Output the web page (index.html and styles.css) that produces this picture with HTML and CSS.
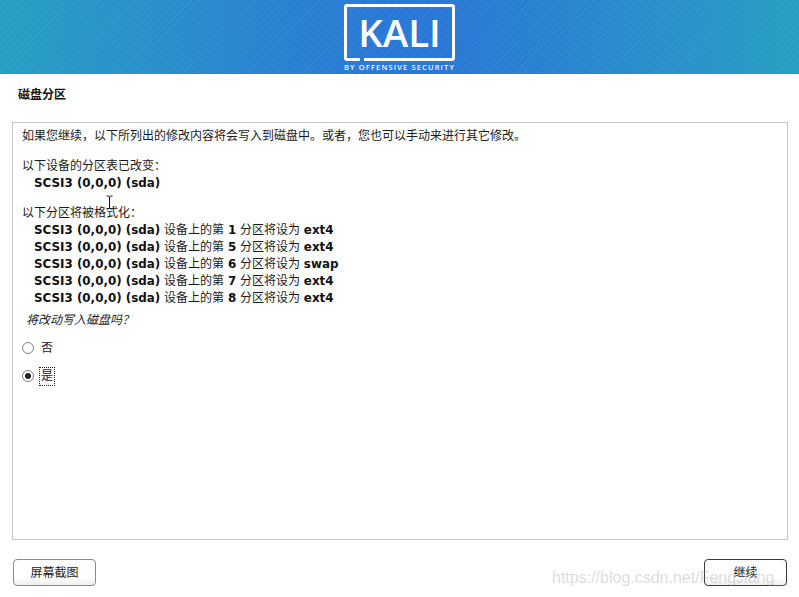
FILE: index.html
```html
<!DOCTYPE html>
<html lang="zh-CN">
<head>
    <meta charset="UTF-8">
    <title>磁盘分区</title>
    <link rel="stylesheet" href="styles.css">
</head>
<body>
<div class="banner">
    <div class="logo-box"><span class="logo-word">KALI</span></div>
    <div class="logo-sub">BY OFFENSIVE SECURITY</div>
</div>
<div class="page-title">磁盘分区</div>
<div class="content-box">
    <div class="line first">如果您继续，以下所列出的修改内容将会写入到磁盘中。或者，您也可以手动来进行其它修改。</div>
    <div class="line gap-big">以下设备的分区表已改变：</div>
    <div class="line indent"><b>SCSI3 (0,0,0) (sda)</b></div>
    <div class="line gap-mid">以下分区将被格式化：</div>
    <div class="line indent"><b>SCSI3 (0,0,0) (sda)</b> 设备上的第 <b>1</b> 分区将设为 <b>ext4</b></div>
    <div class="line indent"><b>SCSI3 (0,0,0) (sda)</b> 设备上的第 <b>5</b> 分区将设为 <b>ext4</b></div>
    <div class="line indent"><b>SCSI3 (0,0,0) (sda)</b> 设备上的第 <b>6</b> 分区将设为 <b>swap</b></div>
    <div class="line indent"><b>SCSI3 (0,0,0) (sda)</b> 设备上的第 <b>7</b> 分区将设为 <b>ext4</b></div>
    <div class="line indent"><b>SCSI3 (0,0,0) (sda)</b> 设备上的第 <b>8</b> 分区将设为 <b>ext4</b></div>
    <div class="question">将改动写入磁盘吗？</div>
    <div class="radio-row first-radio"><span class="radio"></span><span class="radio-label">否</span></div>
    <div class="radio-row"><span class="radio checked"></span><span class="radio-label focused">是</span></div>
</div>
<div class="button-row">
    <div class="button">屏幕截图</div>
    <div class="button default">继续</div>
</div>
<svg class="cursor" width="9" height="15" viewBox="0 0 9 15">
    <path d="M1.5 1H3.5L4.5 2L5.5 1H7.5M4.5 2V13M1.5 14H3.5L4.5 13L5.5 14H7.5" fill="none" stroke="#111" stroke-width="1"/>
</svg>
<div class="watermark">https://blog.csdn.net/FengJiang_</div>
</body>
</html>
```

FILE: styles.css
```css
* {
    box-sizing: border-box;
}

body {
    margin: 0;
    width: 799px;
    height: 597px;
    overflow: hidden;
    background-color: #fff;
    color: #1a1a1a;
    font-family: "DejaVu Sans", "Noto Sans CJK SC", sans-serif;
    font-size: 12px;
    position: relative;
}

.banner {
    height: 74px;
    padding-top: 4px;
    display: flex;
    flex-direction: column;
    align-items: center;
    background-color: #2a7ad4;
    background-image:
        repeating-linear-gradient(135deg, rgba(255, 255, 255, 0.025) 0 2px, rgba(255, 255, 255, 0) 2px 5px),
        linear-gradient(90deg, #279fc2 0%, #2a78d6 48%, #2a78d6 56%, #279fc2 100%);
}

.logo-box {
    width: 111px;
    height: 57px;
    border: 3px solid #fff;
    border-radius: 3px;
    display: flex;
    align-items: center;
    justify-content: center;
    position: relative;
}

/* little notch in the bottom edge of the frame */
.logo-box::after {
    content: "";
    position: absolute;
    left: 13px;
    bottom: -3px;
    width: 4px;
    height: 3px;
    background-color: #2a78d6;
}

.logo-word {
    color: #fff;
    font-family: "Open Sans", sans-serif;
    font-size: 38.5px;
    font-weight: 600;
    line-height: 1;
}

.logo-sub {
    margin-top: 2px;
    color: #f2f6fc;
    font-family: "Open Sans", sans-serif;
    font-size: 7.5px;
    font-weight: 600;
    line-height: 9px;
    letter-spacing: 1.15px;
    white-space: nowrap;
}

.page-title {
    height: 48px;
    padding: 14px 0 0 18px;
    font-size: 12px;
    line-height: 15px;
    font-weight: bold;
    color: #111;
}

.content-box {
    margin: 0 11px 0 12px;
    height: 418px;
    padding: 5px 9px 0;
    border: 1px solid #c4c4c4;
}

.line {
    line-height: 17px;
    white-space: nowrap;
}

.line b {
    color: #111;
    font-size: 11.9px;
}

.gap-big {
    margin-top: 13px;
}

.gap-mid {
    margin-top: 13px;
}

.indent {
    padding-left: 12px;
}

.question {
    margin-top: 5px;
    padding-left: 4px;
    font-style: italic;
    line-height: 17px;
}

.radio-row {
    display: flex;
    align-items: center;
    height: 28px;
}

.first-radio {
    margin-top: 5px;
}

.radio {
    width: 12px;
    height: 12px;
    margin-right: 5px;
    border: 1px solid #7d7d7d;
    border-radius: 50%;
    background-color: #fff;
    display: flex;
    align-items: center;
    justify-content: center;
}

.radio.checked::after {
    content: "";
    width: 6px;
    height: 6px;
    border-radius: 50%;
    background-color: #222;
}

.radio-label {
    padding: 0 1px;
    line-height: 17px;
    border: 1px dotted transparent;
}

.radio-label.focused {
    border-color: #222;
}

.button-row {
    display: flex;
    justify-content: space-between;
    margin-top: 19px;
    padding: 0 12px 0 13px;
}

.button {
    width: 83px;
    height: 27px;
    border: 1px solid #8a8a8a;
    border-radius: 4px;
    background-image: linear-gradient(#fff 70%, #eeeeee);
    line-height: 26px;
    text-align: center;
    color: #222;
}

.button.default {
    border-color: #3a3a3a;
}

.cursor {
    position: absolute;
    left: 105px;
    top: 195px;
}

.watermark {
    position: absolute;
    left: 552px;
    top: 569px;
    width: 240px;
    overflow: hidden;
    white-space: nowrap;
    font-family: "Liberation Sans", sans-serif;
    font-size: 16px;
    line-height: 18px;
    color: rgba(150, 150, 150, 0.34);
}
```
